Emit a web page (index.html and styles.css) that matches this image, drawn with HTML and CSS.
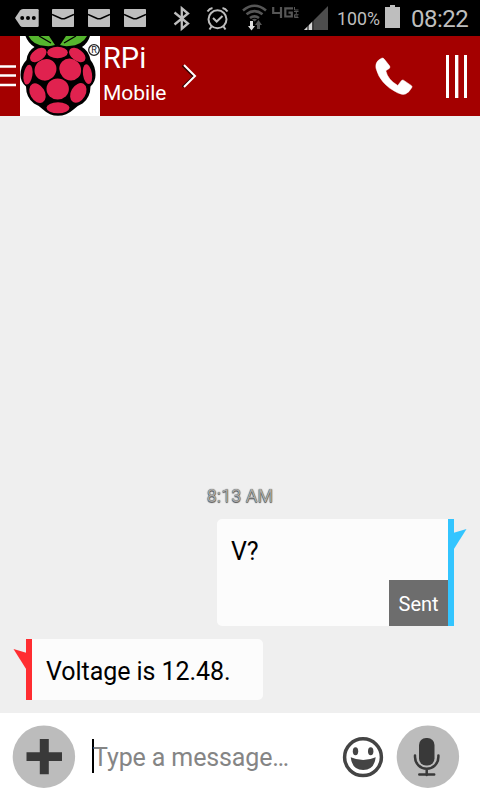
FILE: index.html
```html
<!DOCTYPE html>
<html lang="en">
<head>
<meta charset="utf-8">
<title>RPi</title>
<link rel="stylesheet" href="styles.css">
</head>
<body>
<div class="screen">
  <div class="status">
    <div class="notifications">
      <svg width="24" height="36" viewBox="15 0 24 36"><path d="M23 9h14.500q1.200 0 1.200 1.200v15.600q0 1.200-1.200 1.200H23q-2 0-3-1.500L15 18l5-7.500Q21 9 23 9z" fill="#bebebe"/><circle cx="22.200" cy="18" r="2"/><circle cx="28" cy="18" r="2"/><circle cx="33.800" cy="18" r="2"/></svg>
      <svg width="22" height="36" viewBox="52 0 22 36"><rect x="52" y="9" width="22" height="18" rx=".7" fill="#bebebe"/><path d="M52 14.500l8.500 3.700q2.500 1.200 5 0l8.500-3.700" fill="none" stroke="#000" stroke-width="1.600"/></svg>
      <svg width="22" height="36" viewBox="52 0 22 36"><rect x="52" y="9" width="22" height="18" rx=".7" fill="#bebebe"/><path d="M52 14.500l8.500 3.700q2.500 1.200 5 0l8.500-3.700" fill="none" stroke="#000" stroke-width="1.600"/></svg>
      <svg width="22" height="36" viewBox="52 0 22 36"><rect x="52" y="9" width="22" height="18" rx=".7" fill="#bebebe"/><path d="M52 14.500l8.500 3.700q2.500 1.200 5 0l8.500-3.700" fill="none" stroke="#000" stroke-width="1.600"/></svg>
    </div>
    <svg class="bluetooth" width="18" height="36" viewBox="173 0 18 36"><path d="M174.500 12.500l13.500 11-6.200 5.200V8.300l6.200 5.200-13.500 11" fill="none" stroke="#bebebe" stroke-width="2.300"/></svg>
    <svg class="alarm" width="24" height="36" viewBox="206 0 24 36"><g fill="none" stroke="#bebebe" stroke-width="2"><circle cx="217.500" cy="19.300" r="9"/><path d="M207.500 11.500q2-3 5-3.500M227.500 11.500q-2-3-5-3.500M211.500 26.500l-2 3M223.500 26.500l2 3M213 18l3.700 3.500 5.800-5.500"/></g></svg>
    <svg class="wifi" width="26" height="36" viewBox="242 0 26 36"><g fill="none" stroke="#565656" stroke-width="2.600"><path d="M243 10.500q11.500-9.500 23 0M246.500 14.300q8-6.200 16 0M250 18q4.500-3.400 9 0"/></g><path d="M252 19.500q2.500-1.500 5 0l-2.500 2z" fill="#565656"/><path d="M250 21h3v5h2l-3.500 4.500-3.500-4.500h2z" fill="#dedede"/><path d="M257 29h3v-4h2l-3.500-5-3.500 5h2z" fill="#565656"/></svg>
    <svg class="lte" width="28" height="36" viewBox="272 0 28 36"><g fill="none" stroke="#565656"><path d="M273.200 7v6h8.500M281 7v11M293 8.300h-7.700v8.200h6.500v-3.800H288.500" stroke-width="2.200"/><path d="M294.500 7v3h4M294 11.500h4.500M296.300 11.500v2.500M298.500 14.700h-4v2.800h4M294.500 16.100h3.500" stroke-width="1"/></g></svg>
    <svg class="signal" width="24" height="36" viewBox="304 0 24 36"><path d="M328 6v24h-24z" fill="#4d4d4d"/><path d="M313 21v9h-9z" fill="#d5d5d5"/><path d="M308 25v5M312.800 20v10" stroke="#000" stroke-width="1"/></svg>
    <span class="percent">100%</span>
    <svg class="battery" width="15" height="36" viewBox="385 0 15 36"><path d="M390 5h5v2h5v21h-15V7h5z" fill="#bebebe"/></svg>
    <span class="clock">08:22</span>
  </div>

  <header class="header">
    <svg class="drawer" width="20" height="80" viewBox="0 36 20 80"><path d="M0 66.500h16M0 75.500h16M0 85h16" stroke="#fff" stroke-width="2.600"/></svg>
    <svg class="avatar" width="80" height="80" viewBox="20 36 80 80">
      <rect x="20" y="36" width="80" height="80" fill="#fff"/>
      <path d="M25.500 36H90q-2 7-8 11 7 4 8.500 13 5 6 5 15 0 7-5 11.500 0 11-8 17-5 2-9 6-7 6.300-15.500 6.300T43 109.500q-4-4-9-6-8-6-8-17-5.500-4.500-5.500-11.500 0-9 6-15 1-9 8-13-6.500-4-9-11z"/>
      <path d="M28.500 36H49l6 9q-4 1.500-9 1-13-.5-17.500-10zM87 36H66l-6 9q4 1.500 9 1 13-.5 18-10z" fill="#55b52e"/>
      <path d="M39 36l12 7M76 36l-12 7" stroke="#000" stroke-width="1.300"/>
      <path d="M53 36h9l-4.500 4.500z" fill="#000"/>
      <g fill="#e0224f">
        <ellipse cx="57.500" cy="52.500" rx="10.300" ry="5.800"/>
        <ellipse cx="38.200" cy="55" rx="9.300" ry="5.700" transform="rotate(-36 38.200 55)"/>
        <ellipse cx="77.300" cy="55" rx="9.300" ry="5.700" transform="rotate(36 77.300 55)"/>
        <ellipse cx="45.500" cy="69.800" rx="11.300" ry="10.500" transform="rotate(-40 45.500 69.800)"/>
        <ellipse cx="70.200" cy="69.500" rx="11.300" ry="10.500" transform="rotate(45 70.200 69.500)"/>
        <ellipse cx="28" cy="74.700" rx="4.400" ry="10" transform="rotate(9 28 74.700)"/>
        <ellipse cx="87.500" cy="74.200" rx="4.500" ry="10" transform="rotate(-9 87.500 74.200)"/>
        <ellipse cx="57.700" cy="89" rx="11.200" ry="10.500"/>
        <ellipse cx="37.500" cy="93.200" rx="7.300" ry="10.500" transform="rotate(-30 37.500 93.200)"/>
        <ellipse cx="78.300" cy="92.900" rx="7.300" ry="10.500" transform="rotate(30 78.300 92.900)"/>
        <ellipse cx="58" cy="107.800" rx="11.500" ry="5.500"/>
      </g>
      <circle cx="94" cy="50" r="5.300" fill="#fff" stroke="#222" stroke-width="1.300"/>
      <text class="registered" x="94" y="53.300" text-anchor="middle">R</text>
    </svg>
    <div class="contact"><span class="name">RPi</span><span class="type">Mobile</span></div>
    <svg class="chevron" width="16" height="80" viewBox="182 36 16 80"><path d="M182.500 65.500l11 11-11 10.500" fill="none" stroke="#300" stroke-width="2"/><path d="M184 65l11 11-11 11" fill="none" stroke="#fff" stroke-width="2"/></svg>
    <svg class="phone" width="38" height="80" viewBox="375 36 38 80"><path d="M381.500 58.300q1.500-.8 2.500.5l5.500 7q1 1.300-.2 2.600l-3.500 2.400q2 9 12 14.700l3.500-4.700q.9-1.200 2.200-.6l7.700 5.200q1.400 1 .5 2.300-2.500 4.700-6.200 6.300-3 1.300-8-1.200-17.500-8.500-21.500-24.500-1.200-7 5.500-10z" fill="#fff" stroke="#fff" stroke-width=".5"/></svg>
    <svg class="bars" width="22" height="80" viewBox="446 36 22 80"><path d="M447.500 55v43M456.500 55v43M465.500 55v43" stroke="#fff" stroke-width="3"/><path d="M458.500 55v43" stroke="#c45b5b"/></svg>
  </header>

  <main class="thread">
    <time class="time">8:13 AM</time>
    <div class="bubble sent">
      <p>V?</p>
      <span class="receipt">Sent</span>
      <svg class="tail" width="14" height="22" viewBox="0 0 14 22"><path d="M0 4l13.500-4L0 21.500z" fill="#33c5ff"/></svg>
    </div>
    <div class="bubble received">
      <svg class="tail" width="14" height="22" viewBox="0 0 14 22"><path d="M14 4L.5 0 14 21.500z" fill="#ff2d31"/></svg>
      <p>Voltage is 12.48.</p>
    </div>
  </main>

  <footer class="composer">
    <svg width="64" height="64" viewBox="12 725 64 64"><circle cx="43.900" cy="756.700" r="31.200" fill="#bcbcbc"/><path d="M39.800 739h9v13.200H62v8.800H48.800v13.200h-9V761H26.500v-8.800h13.300z" fill="#393939"/></svg>
    <div class="field"><span class="placeholder">Type a message…</span></div>
    <svg class="smile" width="42" height="64" viewBox="342 725 42 64"><circle cx="363" cy="757.200" r="18.400" fill="none" stroke="#444" stroke-width="3.500"/><ellipse cx="355.500" cy="751.300" rx="2.700" ry="4" fill="#444"/><ellipse cx="370.700" cy="751.300" rx="2.700" ry="4" fill="#444"/><path d="M350.700 757.300q12.500 5.500 25 0-1.500 12.700-12.500 12.700t-12.500-12.700z" fill="#444"/></svg>
    <svg class="mic" width="64" height="64" viewBox="396 725 64 64"><circle cx="427.900" cy="756.700" r="31.200" fill="#bcbcbc"/><rect x="419" y="738" width="15.500" height="27.500" rx="7" fill="#393939"/><path d="M415 755.500v1.500a11.700 11.700 0 0 0 23.400 0v-1.500M426.700 769v6M419.300 774.600h14.900" fill="none" stroke="#393939" stroke-width="2.500" stroke-linecap="round"/></svg>
  </footer>
</div>
</body>
</html>
```
FILE: styles.css
```css
* { box-sizing: border-box; }
body { margin: 0; font-family: Roboto, "Liberation Sans", sans-serif; }
svg { display: block; flex: none; }
p { margin: 0; }
.screen { width: 480px; height: 800px; display: flex; flex-direction: column; background: #efefef; overflow: hidden; }

.status { height: 36px; flex: none; display: flex; background: #000; color: #bebebe; white-space: nowrap; }
.notifications { display: flex; gap: 14px; padding-left: 15px; width: 173px; }
.notifications svg:first-child { margin-right: -1px; }
.alarm { margin-left: 15px; }
.wifi { margin-left: 12px; }
.lte { margin-left: 4px; }
.signal { margin-left: 4px; }
.percent { width: 48px; margin-left: 9px; font-size: 17.8px; line-height: 37px; }
.clock { margin-left: 11px; font-size: 24px; line-height: 38px; letter-spacing: -0.5px; }

.header { height: 80px; flex: none; display: flex; background: #a40000; color: #fff; }
.registered { font: 9px Roboto, sans-serif; fill: #222; }
.contact { width: 82px; padding: 5px 0 0 3px; display: flex; flex-direction: column; }
.name { font-size: 29px; line-height: 34px; }
.type { font-size: 21px; line-height: 37px; }
.phone { margin-left: 177px; }
.bars { margin-left: 33px; }

.thread { flex: 1; display: flex; flex-direction: column; justify-content: flex-end; padding: 0 26px 13px; }
.time { align-self: center; margin-bottom: 13px; font-size: 18px; line-height: 21px; color: #aaa; text-shadow: 0 0 1px #333, 0 1px 1px #555; }
.bubble { position: relative; background: #fcfcfc; color: #000; font-size: 25px; line-height: 30px; letter-spacing: -0.06px; }
.sent { align-self: flex-end; display: flex; flex-direction: column; justify-content: space-between; width: 237px; height: 107px; padding: 18px 0 0 14px; border-right: 6px solid #33c5ff; border-radius: 5px 0 0 5px; }
.receipt { align-self: flex-end; width: 59px; height: 46px; background: #6d6d6d; color: #fff; font-size: 20px; line-height: 48px; text-align: center; }
.received { width: 237px; height: 61px; margin-top: 13px; padding: 18px 0 0 14px; border-left: 6px solid #ff2d31; border-radius: 0 5px 5px 0; }
.tail { position: absolute; top: 10px; }
.sent .tail { right: -19px; }
.received .tail { left: -19px; }

.composer { height: 87px; flex: none; display: flex; align-items: flex-start; padding: 12px 0 0 12px; background: #fff; }
.field { width: 230px; height: 34px; margin: 14px 0 0 16px; border-left: 2px solid #000; color: #858585; font-size: 25px; line-height: 37px; letter-spacing: -0.12px; white-space: nowrap; }
.placeholder { margin-left: -1px; }
.smile { margin-left: 20px; }
.mic { margin-left: 12px; }
```
